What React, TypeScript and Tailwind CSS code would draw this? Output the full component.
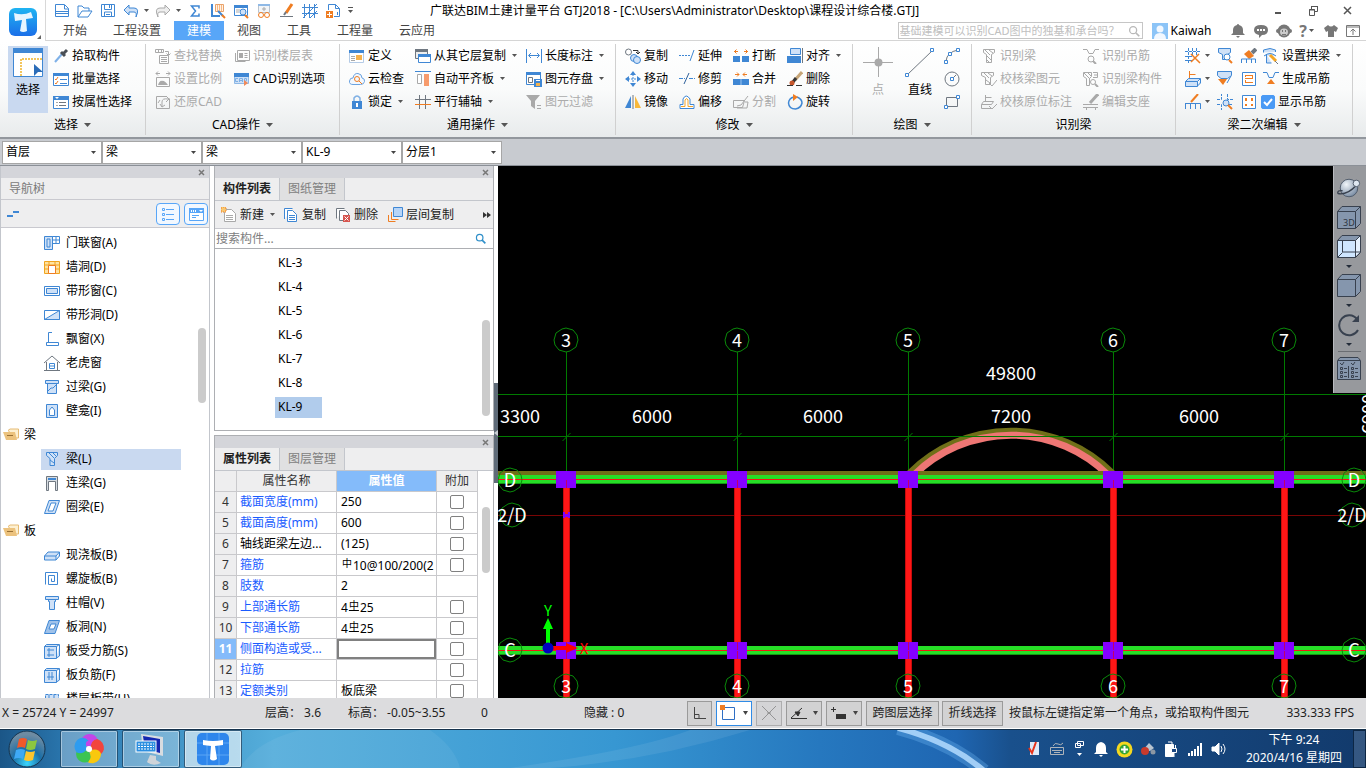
import { useState } from "react";
import type { ReactNode } from "react";

const B = "#3f87d4";
const L = "#cfe1f7";
const G = "#a9a9a9";
const O = "#ef7d22";
const D = "#6f7780";

// 16x16 drawings, keyed by name
const icons: Record<string, ReactNode> = {
  newFile: <path d="M1.500 13.500v-12h9l4 4v8zM10.500 2v4h4M1.500 8.500h13M1.500 10.500h13" fill="none" stroke={B} />,
  open: <path d="M1 14V3h4l2 2h5v3M1 14l4-6h10l-4 6z" fill="none" stroke={B} />,
  save: <path d="M1.500 1.500h13v12h-13zM4.500 1.500v5h7v-5M4.500 13v-4h7v4M9.500 2v3M6 11.500h4" fill="none" stroke={B} />,
  undo: <path d="M6 2 1 7l5 5V9h5q3 0 2 5 4-9-2-9H6z" fill={L} stroke={B} />,
  redo: <path d="M10 2l5 5-5 5V9H5q-3 0-2 5-4-9 2-9h5z" fill="#eee" stroke={G} />,
  sum: <path d="M12 5.500V3H4.500L8.500 8l-4 5H12v-2.500" fill="none" stroke={B} strokeWidth="1.500" />,
  measure: (
    <>
      <path d="M2 1v12h8" fill="none" stroke={B} strokeWidth="2" />
      <path d="M5.500 1.500h8v7h-8z" fill="#fff3e6" stroke="#e9a36b" />
      <path d="M7 3h5M7 5h5M7 7h5" stroke={O} strokeDasharray="1 1" />
      <path d="M8 8l5 5" stroke={B} strokeWidth="2" />
      <path d="M12 12l3 3" stroke={O} strokeWidth="2" />
    </>
  ),
  viewZoom: (
    <>
      <path d="M1.500 2.500h13v10h-13z" fill="#fff" stroke={B} />
      <path d="M1 2h14v3H1z" fill={B} />
      <path d="M3 7h4M3 9h3" stroke={G} />
      <circle cx="10" cy="9" r="3" fill={L} stroke={B} />
      <path d="M12 12l3 3" stroke={O} strokeWidth="2" />
    </>
  ),
  glasses: (
    <>
      <path d="M2.500 1.500h11v8h-11z" fill="#f2f5f8" stroke="#b8c3cf" />
      <path d="M2 1h12v2H2z" fill="#8fb9e6" />
      <path d="M8 4v4M6 6h4" stroke={G} />
      <circle cx="5" cy="12" r="2.500" fill="none" stroke={O} />
      <circle cx="11" cy="12" r="2.500" fill="none" stroke={O} />
    </>
  ),
  pen: (
    <>
      <path d="M13 1 7 10" stroke={O} strokeWidth="3" />
      <path d="M7 9l-2 3" stroke={D} strokeWidth="2" />
      <path d="M1 13.500h13" stroke={D} />
    </>
  ),
  gridBlue: <path d="M0 4.500h16M0 10.500h16M2.500 1v14M7.500 1v14M12.500 1v14M1 15 15 1M8 15l7-7" fill="none" stroke={B} />,
  pageAdd: (
    <>
      <path d="M3.500 7V1.500h7l4 4v8H9M10.500 1.500v4h4" fill="none" stroke={B} />
      <path d="M1 8h7v7H1z" fill={O} />
      <path d="M4.500 9v5M2 11.500h5" stroke="#fff" />
      <path d="M12.500 9v3" stroke={B} />
    </>
  ),
  dropper: (
    <>
      <path d="M2 14 9 6" stroke="#7fb1e8" strokeWidth="2" />
      <path d="M8 4l4 4M10 6l4-4" stroke="#4a4f55" strokeWidth="3" />
    </>
  ),
  checklist: (
    <>
      <path d="M.500 2.500h15v12H.500z" fill="#fff" stroke={B} />
      <path d="M0 2h16v3H0z" fill={B} />
      <path d="M2 8l1 1 2-3M2 12l1 1 2-3" fill="none" stroke={O} />
      <path d="M7 8.500h7M7 12.500h7" stroke={B} />
    </>
  ),
  proplist: (
    <>
      <path d="M.500 2.500h15v12H.500z" fill="#fff" stroke={B} />
      <path d="M0 2h16v4H0z" fill={B} />
      <path d="M2 3h4l-2 2z" fill="#fff" />
      <path d="M3 8.500h2M3 11.500h2" stroke={G} />
      <path d="M6 8.500h7M6 11.500h7" stroke={D} />
    </>
  ),
  findReplace: <path d="M.500 1.500h8v3h-8zM3.500 1.500v3M6.500 1.500v3M10 3.500h3.500V7M11.500 5.500l2 2 2-2M4.500 7.500h9v8h-9zM6 9.500h6M6 11.500h6M6 13.500h6" fill="none" stroke={G} />,
  scale: (
    <>
      <path d="M1.500 6.500h13v9h-13zM1 2.500h4M11 2.500h4M3 .500l-2 2 2 2M13 .500l2 2-2 2" fill="none" stroke={G} />
      <path d="M3 14q2-5 4-4 2-1 6 4z" fill={G} />
    </>
  ),
  restore: <path d="M1.500 2.500h10M1.500 2.500v12h13v-10M5 6l-2 3M7 13V8q0-4 6-3M5 10l2 3 3-2M11 2l3 3-3 3" fill="none" stroke={G} />,
  idTable: (
    <>
      <path d="M3.500 2.500h12v10h-12zM1.500 5v8.500h10" fill="none" stroke={G} />
      <path d="M5 5h4v5H5z" fill={G} />
      <path d="M10.500 5.500h3M10.500 7.500h3M10.500 9.500h3" stroke={G} />
    </>
  ),
  cad: (
    <>
      <path d="M.500 2.500h14v10H.500z" fill={L} stroke="#8fb9e6" />
      <path d="M0 2h15v4H0z" fill={B} />
      <path d="M4 7.500H1.500v3H4M5.500 11V7.500h3V11M6 9.500h3M10.500 7.500v3q3 0 2-3z" fill="none" stroke="#7fb0e4" />
      <path d="M10 9v6l4-3z" fill="#f08a5a" />
    </>
  ),
  define: (
    <>
      <path d="M.500 2.500h14v12H.500z" fill="#fff" stroke="#b4cbe6" />
      <path d="M0 2h15v3H0z" fill={B} />
      <path d="M7 7h6v5H7z" fill="#f5b24d" />
      <path d="M2 8.500h4M2 10.500h4M2 12.500h4" stroke={G} />
    </>
  ),
  cloud: (
    <>
      <path d="M4 13.500q-4 0-3.500-3.500T4 7q1-5 5-4.500T13 7q3 .500 2.500 3.500t-4 3z" fill="#f3f8fe" stroke="#6ba3e0" />
      <circle cx="8" cy="8" r="2.500" fill="none" stroke={O} />
      <path d="M10 10l3 3" stroke={O} />
    </>
  ),
  lock: (
    <>
      <path d="M5 8V4q3-4 6 0v4" fill="none" stroke="#7fb0e4" strokeWidth="1.500" />
      <rect x="3" y="7" width="10" height="8" fill={B} />
      <path d="M8 9v4" stroke="#fff" strokeWidth="2" />
    </>
  ),
  copyLayer: (
    <>
      <path d="M.500 1.500h12v9H.500z" fill="#eee" stroke={D} />
      <path d="M0 1h13v3H0z" fill={D} />
      <path d="M3.500 6.500h12v8h-12z" fill="#fff" stroke={B} />
      <path d="M3 6h13v3H3z" fill={B} />
    </>
  ),
  alignSlab: (
    <>
      <path d="M0 .500h16" stroke={B} />
      <path d="M2.500 3.500h4v9h-4z" fill="#fff" stroke={G} />
      <path d="M9 3h5v12H9z" fill="#f79b6c" />
    </>
  ),
  parallel: (
    <>
      <path d="M4.500 1v14M10.500 1v14" stroke={D} />
      <path d="M0 5.500h16" stroke={D} />
      <path d="M0 10.500h16" stroke={O} />
    </>
  ),
  length: <path d="M.500 1v14M15.500 1v14M3 7.500h10M5 5 2.500 7.500 5 10M11 5l2.500 2.500L11 10" fill="none" stroke={B} />,
  store: (
    <>
      <path d="M.500 1.500h14v12H.500z" fill="#fff" stroke={B} />
      <path d="M0 1h15v3H0z" fill={B} />
      <path d="M2.500 6.500h4v5h-4z" fill="none" stroke={D} />
      <path d="M8 8h8v8H8z" fill={B} />
      <path d="M10 12h4v3h-4z" fill="#f5b24d" />
      <path d="M10 9h4v1h-4z" fill="#fff" />
    </>
  ),
  filter: (
    <>
      <path d="M0 1h14L9 7v8l-4-3V7z" fill={G} />
      <path d="M11 11.500h4M11 14.500h4" stroke={G} />
    </>
  ),
  copy: (
    <>
      <circle cx="3.500" cy="4" r="3" fill="#fff" stroke={D} />
      <path d="M8 2.500h5v3M11 4l2 2 2-2" fill="none" stroke="#333" />
      <circle cx="9" cy="10" r="3.500" fill={L} stroke={B} />
      <circle cx="12" cy="12" r="3.500" fill={L} stroke={B} />
    </>
  ),
  move: (
    <>
      <path d="M8 3v10M3 8h10" stroke={B} strokeDasharray="2 1" />
      <path d="M8 0l3 4H5zM8 16l3-4H5zM0 8l4-3v6zM16 8l-4-3v6z" fill={B} />
    </>
  ),
  mirror: (
    <>
      <path d="M6 2v12H0z" fill={B} />
      <path d="M10 2v12h6z" fill="#f9b83a" />
      <path d="M8 1v14" stroke={D} />
    </>
  ),
  extend: (
    <>
      <path d="M0 7.500h11" stroke={B} strokeDasharray="2 1" />
      <path d="M15 2l-4 11" stroke={B} />
    </>
  ),
  trim: (
    <>
      <path d="M0 7.500h6M10 7.500h6" stroke={B} strokeDasharray="4 1" />
      <path d="M10 2 5 13" stroke="#2d5f9a" />
    </>
  ),
  offset: (
    <>
      <path d="M1 14.500v-4h3V5q3-6 7 0v5.500h4v4z" fill="#fff" stroke={B} />
      <path d="M2 12.500h4V6q2-3 3 0v6.500h5" fill="none" stroke="#f3a52a" />
    </>
  ),
  breakIt: (
    <>
      <path d="M0 8h7v6H0zM9 8h7v6H9z" fill={B} />
      <path d="M1 3.500h4M3.500 1.500l-2 2 2 2M11 3.500h4M12.500 1.500l2 2-2 2" fill="none" stroke={O} />
    </>
  ),
  merge: (
    <>
      <path d="M0 8h16v6H0z" fill={B} />
      <path d="M8 8v6" stroke="#9cc4ef" />
      <path d="M2 3.500h4M4 1.500l2 2-2 2M10 3.500h4M12 1.500l-2 2 2 2" fill="none" stroke={O} />
    </>
  ),
  split: <path d="M.500 6.500h11l-2 7h-9zM15 2 8 11l-4 1M12 8h3l-1 6H4" fill="none" stroke={G} />,
  align: (
    <>
      <path d="M3.500.500h10v6h-10z" fill={L} stroke={B} />
      <path d="M0 8h14v7H0z" fill={B} />
      <path d="M15.500 0v15" stroke={D} />
    </>
  ),
  erase: (
    <>
      <path d="M15 1 8 9" stroke="#c6a577" strokeWidth="3" />
      <path d="M9 7l-3 4" stroke="#333" strokeWidth="3" />
      <circle cx="5" cy="12" r="2.500" fill="#c4552b" />
      <path d="M0 14.500h6M9 14.500h6" stroke="#333" />
    </>
  ),
  rotate: (
    <>
      <path d="M10 3q5 2 5 6-1 5-6.500 6Q2 15 1.500 9 2 4 7 3" fill="none" stroke={B} strokeWidth="1.500" />
      <path d="M6 0l5 3-5 4z" fill={O} />
    </>
  ),
  arc: (
    <>
      <path d="M2 13Q3 4 14 2" fill="none" stroke={D} />
      <path d="M.500 12.500h3v3h-3zM4.500 4.500h3v3h-3zM12.500.500h3v3h-3z" fill="#fff" stroke={B} />
    </>
  ),
  circle: (
    <>
      <circle cx="8" cy="8" r="7" fill="none" stroke={D} />
      <path d="M8 8l4-4" stroke={D} />
      <path d="M6.500 6.500h3v3h-3z" fill="#fff" stroke={B} />
    </>
  ),
  rect: (
    <>
      <path d="M2.500 3.500h11v9h-11z" fill="none" stroke={D} />
      <path d="M12.500 1.500h3v3h-3zM.500 11.500h3v3h-3z" fill="#fff" stroke={B} />
    </>
  ),
  idBeam: <path d="M2.500 1.500h11v3l-3 2v8h-5v-8l-3-2zM4 2l5 5M8 2l4 3M6 8l4 4M6 12l2 2" fill="none" stroke={G} />,
  checkBeam: <path d="M.500 1.500h12v3l-3 2v7h-5v-7l-4-2zM3 2l5 5M7 2l4 3M5 9l4 3M8 12l3 3 5-6" fill="none" stroke={G} />,
  checkNote: <path d="M4.500 7V1M4.500 3.500h6M2.500 7.500h10l-2 3h-10zM.500 10.500v4h10M8 12l3 3 5-5" fill="none" stroke={G} />,
  idHanger: (
    <>
      <path d="M0 1.500h4l2 4h4l2-4h4" fill="none" stroke={G} />
      <circle cx="8" cy="11" r="3" fill="none" stroke={G} />
      <path d="M10 13l3 3" stroke={G} strokeWidth="2" />
    </>
  ),
  idMember: (
    <>
      <path d="M.500 1.500h8v4l-2 2v7h-3v-7l-3-2zM10 1.500h4.500v5H10M11 4h3" fill="none" stroke={G} />
      <path d="M1 2l6 6M5 2l3 3" stroke={G} />
      <circle cx="10" cy="11" r="2.500" fill="#fff" stroke={G} />
      <path d="M12 13l3 3" stroke={G} strokeWidth="2" />
    </>
  ),
  editSupport: (
    <>
      <path d="M15 0 7 9" stroke={G} strokeWidth="3" />
      <path d="M0 10.500h15M0 13.500h15M3.500 13v3M12.500 13v3" stroke={G} />
    </>
  ),
  gridEdit: (
    <>
      <path d="M0 3.500h15M0 8.500h9M0 12.500h7M3.500 0v15M7.500 0v7M11.500 0v7" stroke={B} fill="none" strokeDasharray="3 1" />
      <path d="M6 6l9 9M14 6l-8 8" stroke={O} strokeWidth="1.500" />
    </>
  ),
  boxNote: (
    <>
      <path d="M4.500 9V0M4.500 3.500h6" stroke={O} />
      <path d="M.500 10.500l3-3h12l-3 3zM.500 10.500v5h12v-5M12.500 15l3-3V8" fill={L} stroke={B} />
    </>
  ),
  comb: (
    <>
      <path d="M13 0 6 8" stroke={O} strokeWidth="2" />
      <path d="M0 9.500h15.500v5.500M.500 10v5M5.500 10v5M10.500 10v5" fill="none" stroke={B} />
    </>
  ),
  beamSearch: (
    <>
      <path d="M1.500.500h12v4l-3 2v5h-5v-5l-4-2z" fill={L} stroke={B} />
      <circle cx="10" cy="9" r="3" fill="#fff" stroke={B} />
      <path d="M12 12l3 3" stroke={O} strokeWidth="2" />
    </>
  ),
  beamDown: (
    <>
      <path d="M.500.500h14v4l-4 3H4l-3.500-3z" fill={L} stroke={B} />
      <path d="M1 8h9l-4 6z" fill={O} />
      <path d="M10 12l4-7" stroke={B} />
    </>
  ),
  crossSearch: (
    <>
      <path d="M0 5.500h4.500V0M10.500 0v5.500H16M0 10.500h4.500V16M12 10.500h3" fill="none" stroke={B} strokeDasharray="3 1" />
      <circle cx="9" cy="9" r="3" fill={L} stroke={B} />
      <path d="M11 11l4 4" stroke={O} strokeWidth="2" />
    </>
  ),
  brush: (
    <>
      <path d="M15 1l-4 4" stroke={D} strokeWidth="4" />
      <path d="M8 2l5 6-5 3-5-5z" fill={O} />
      <path d="M.500 15v-4h14v4M5.500 11v4M10.500 11v4" fill="none" stroke={B} />
    </>
  ),
  doc: (
    <>
      <path d="M1.500 1.500h13v13h-13z" fill="#fff" stroke={B} />
      <path d="M4 4.500h8M4 7.500h8M4 11.500h8M4.500 4v2M11.500 4v3M4.500 9v2" stroke={O} />
    </>
  ),
  dots: (
    <>
      <path d="M1.500 1.500h13v13h-13z" fill="#fff" stroke={B} />
      <path d="M4 4h2v3H4zM10 4h2v3h-2zM4 10h2v2H4zM10 10h2v2h-2z" fill={O} />
    </>
  ),
  arch: (
    <>
      <path d="M.500 4.500V2q7-3 12 0v2M3.500 6v9h5M1 8q6-5 12 0" fill={L} stroke={B} />
      <path d="M7 7l6 6" stroke="#f5a623" strokeWidth="3" />
      <path d="M12 13l3 3" stroke={D} />
    </>
  ),
  hanger: (
    <>
      <path d="M0 1.500h4l2 5h4l2-5h4" fill="none" stroke={B} />
      <path d="M8 8l4 5H4z" fill={O} />
    </>
  ),
  // navigation tree
  doorWin: (
    <>
      <path d="M.500 1.500h8v13h-8z" fill={L} stroke={B} />
      <path d="M3 4h3v8H3zM8.500 1.500h7v7h-7zM12 2v6M9 5h6" fill="none" stroke={B} />
    </>
  ),
  wallHole: (
    <>
      <path d="M.500 2.500h15v12H.500zM0 6h16M5 2v4M11 2v4M0 10h4M12 10h4" fill="#ffe3a3" stroke="#f0a520" />
      <path d="M4.500 6.500h7v8h-7z" fill="#fff" stroke={O} />
    </>
  ),
  stripWin: (
    <>
      <path d="M.500 3.500h15v9H.500z" fill="#fff" stroke={B} />
      <path d="M2.500 5.500h11v5h-11z" fill={L} stroke={B} />
    </>
  ),
  stripHole: (
    <>
      <path d="M.500 3.500h15v9H.500z" fill="#fff" stroke={B} />
      <path d="M15.500 3.500v9H.500z" fill={L} stroke={B} />
    </>
  ),
  bay: <path d="M8 1.500H4.500v10M2.500 11.500h12v3h-12z" fill="none" stroke={B} />,
  dormer: (
    <>
      <path d="M0 8l8-7 8 7M2.500 7v8M13.500 7v8M0 15.500h16" fill="none" stroke={D} />
      <path d="M5.500 8.500h5v5h-5zM5 11h6" fill="none" stroke={B} />
    </>
  ),
  lintel: <path d="M1.500 1.500h13v3h-13zM3.500 4.500h9v10h-9zM4 12l3-3h2l3-3" fill={L} stroke={B} />,
  niche: (
    <>
      <path d="M2.500 1.500h11v13h-11z" fill={L} stroke={B} />
      <path d="M5.500 12.500V7l2.500-3 2.500 3v5.500z" fill="#fff" stroke={B} />
    </>
  ),
  beam: <path d="M2.500 1.500h11v3l-3 3v7H6v-7l-3.500-3zM5 2l5 5M6 9l4 3M9 2l3 3" fill={L} stroke={B} />,
  linkBeam: (
    <>
      <path d="M2.500 1.500h11v14h-2v-9h-7v9h-2z" fill="#d8dde2" stroke={D} />
      <path d="M4 3h8v2H4z" fill={B} />
    </>
  ),
  ring: <path d="M5 1.500h10.500L11 14.500H.500zM7 4h5l-3 8H4z" fill={L} fillRule="evenodd" stroke={B} />,
  slab: <path d="M.500 9 4 5h11.500L12 9zM.500 9v4H12V9M12 13l3.500-4V5" fill={L} stroke={B} />,
  spiral: <path d="M1.500 13.500v-12h12v12h-9v-9h6v6h-3v-3" fill="none" stroke={B} />,
  cap: <path d="M1.500 1.500h13v3h-3v2h-1v8h-5v-8h-1v-2h-3zM4 4.500h8" fill={L} stroke={B} />,
  slabHole: (
    <>
      <path d="M5 1.500h10.500L11 14.500H.500z" fill="#9fc2ea" stroke={B} />
      <path d="M7 5h5l-2 5H5z" fill="#fff" stroke={B} />
    </>
  ),
  rebarS: <path d="M.500 3.500h12v12H.500zM.500 3.500l2-2h13l-3 2M15.500 2v11l-3 2M3 7h7M3 12h7M5 5v9" fill={L} stroke={B} />,
  rebarF: <path d="M.500 3.500h12v12H.500zM.500 3.500l2-2h13l-3 2M15.500 2v11l-3 2M5 5v8M8 5v8M3 10h7" fill={L} stroke={B} />,
  strip: <path d="M1.500 3.500h13v11h-13zM5 4v10M10 4v10" fill={L} stroke={B} strokeDasharray="3 1" />,
  folder: (
    <>
      <path d="M5 3.500 7 2h8.500v9H13z" fill="#fdf0d2" stroke="#e6bb74" />
      <path d="M0 5h12l2 8H3z" fill="#ecc27d" />
      <path d="M4 8.500h6" stroke="#9a7135" />
    </>
  ),
  // component list toolbar
  create: (
    <>
      <path d="M3.500 2.500h7l4 4v8h-11zM5 8.500h7M5 10.500h7M5 12.500h7" fill="#fff" stroke={G} />
      <path d="M0 0h5v5H0z" fill="#f7c873" stroke={O} strokeDasharray="1 1" />
    </>
  ),
  copyDoc: <path d="M1.500 12V1.500h8M4.500 3.500h5l4 4v7h-9zM6 8.500h6M6 10.500h6M6 12.500h6" fill="#fff" stroke={B} />,
  deleteDoc: (
    <>
      <path d="M1.500 11.500v-10h8M4.500 3.500h6l3 3v7h-9z" fill="#fff" stroke={D} />
      <path d="M8 8h7v7H8z" fill="#d6544e" />
      <path d="M9.500 9.500l4 4M13.500 9.500l-4 4" stroke="#fff" />
    </>
  ),
  layerCopy: (
    <>
      <path d="M1.500 8v6.500h7M4.500 5v7.500h7" fill="none" stroke={O} />
      <path d="M6.500.500h9v9h-9z" fill="#b6d4f7" stroke={B} />
    </>
  ),
  search: (
    <>
      <circle cx="7" cy="7" r="4" fill="none" stroke="currentColor" strokeWidth="1.500" />
      <path d="M10 10l4 4" stroke="currentColor" strokeWidth="2" />
    </>
  ),
};

function Icon({ name, size = 16 }: { name: string; size?: number }) {
  return (
    <svg width={size} height={size} viewBox="0 0 16 16" className="shrink-0" aria-hidden="true">
      {icons[name]}
    </svg>
  );
}

function Arrow({ small }: { small?: boolean }) {
  return (
    <svg width={small ? 5 : 7} height={small ? 3 : 4} viewBox="0 0 7 4" className="shrink-0 text-[#555]" aria-hidden="true">
      <path d="M0 0h7L3.500 4z" fill="currentColor" />
    </svg>
  );
}

type ItemProps = { icon: string; label: string; disabled?: boolean; arrow?: boolean };

function Item({ icon, label, disabled, arrow }: ItemProps) {
  return (
    <button
      type="button"
      disabled={disabled}
      className="flex h-[23px] items-center gap-[3px] whitespace-nowrap disabled:text-[#ababab]"
    >
      <Icon name={icon} />
      <span>{label}</span>
      {arrow && (
        <span className="pl-[3px]">
          <Arrow small />
        </span>
      )}
    </button>
  );
}

function Group({ title, arrow = true, className, children }: { title: string; arrow?: boolean; className: string; children: ReactNode }) {
  return (
    <section className={"flex shrink-0 flex-col justify-between border-r border-[#d0d0d0] " + className}>
      <div className="flex pl-[9px]">{children}</div>
      <button type="button" className="flex h-5 w-full items-center justify-center gap-1.5">
        {title}
        {arrow && <Arrow />}
      </button>
    </section>
  );
}

function Header() {
  const quick = ["newFile", "open", "save", "undo", "", "redo", "", "sum", "measure", "viewZoom", "glasses", "pen", "gridBlue", "pageAdd"];
  const tabs = ["开始", "工程设置", "建模", "视图", "工具", "工程量", "云应用"];
  const [tab, setTab] = useState("建模");

  return (
    <header className="flex h-[41px] shrink-0 bg-white">
      <button type="button" aria-label="菜单" className="flex w-[46px] shrink-0 items-start border-r border-[#d8d8d8] pt-2 pl-[9px]">
        <svg width="34" height="32" viewBox="0 0 34 32">
          <defs>
            <linearGradient id="logo" x1="0" y1="0" x2="0" y2="1">
              <stop offset="0" stopColor="#1fb4f2" />
              <stop offset="1" stopColor="#1b6fe8" />
            </linearGradient>
          </defs>
          <rect width="28" height="28" rx="6" fill="url(#logo)" />
          <path d="M5 5q9 3 17-1l2 6-7 1 1 12q-4 2-7 0l2-11-7 1z" fill="#e6f5ff" />
          <path d="M32 27v4h-4z" fill="#666" />
        </svg>
      </button>
      <div className="flex min-w-0 flex-1 flex-col border-b border-[#d5d5d5]">
        <div className="flex h-[21px] shrink-0 items-center pl-1">
          <div className="flex w-[380px] shrink-0 items-center">
            {quick.map((name, i) =>
              name ? (
                <button key={i} type="button" aria-label={name} className="flex w-[23px] justify-center">
                  <Icon name={name} />
                </button>
              ) : (
                <span key={i} className="flex w-[9px] justify-center">
                  <Arrow small />
                </span>
              )
            )}
            <span className="pl-1">
              <svg width="5" height="7"><path d="M0 .500h5" stroke="#555" /><path d="M0 3h5L2.500 6z" fill="#555" /></svg>
            </span>
          </div>
          <h1 className="flex-1 truncate">
            广联达BIM土建计量平台 GTJ2018 - [C:\Users\Administrator\Desktop\课程设计综合楼.GTJ]
          </h1>
          <div className="flex shrink-0 gap-[22px] pr-3 text-[#555]">
            <button type="button" aria-label="最小化">
              <svg width="13" height="13"><path d="M4 8h6v2H4z" fill="currentColor" /></svg>
            </button>
            <button type="button" aria-label="还原">
              <svg width="13" height="13">
                <path d="M5.500 5V2.500h6v5H9M3.500 5.500h5v6h-5zM5 2.500h7M3 6h6" fill="none" stroke="currentColor" />
              </svg>
            </button>
            <button type="button" aria-label="关闭">
              <svg width="13" height="13"><path d="M3 3l7 7M10 3l-7 7" stroke="currentColor" strokeWidth="1.500" /></svg>
            </button>
          </div>
        </div>
        <nav className="flex min-h-0 flex-1 items-center pl-1">
          {tabs.map((t) => (
            <button
              key={t}
              type="button"
              onClick={() => setTab(t)}
              className={"h-[19px] px-[13px] " + (t === tab ? "bg-[#58a6f8] text-white" : "text-[#444]")}
            >
              {t}
            </button>
          ))}
          <div className="ml-auto flex items-center gap-[7px] pr-1.5 text-[#777]">
            <label className="mr-0.5 flex h-[17px] w-[245px] items-center border border-[#c6c6c6] px-px text-[#b8b8b8]">
              <input
                aria-label="搜索"
                className="min-w-0 flex-1 text-[11px] outline-none placeholder:text-[#c0c0c0]"
                placeholder="基础建模可以识别CAD图中的独基和承台吗？"
              />
              <Icon name="search" size={14} />
            </label>
            <span className="mr-3 flex items-center gap-[3px] text-black">
              <svg width="16" height="16" viewBox="0 0 16 16">
                <rect width="16" height="16" fill="#8cc4f7" />
                <circle cx="8" cy="6" r="3.500" fill="#f2f8ff" />
                <path d="M2 16q0-6 6-6t6 6z" fill="#f2f8ff" />
              </svg>
              Kaiwah
            </span>
            <svg width="16" height="16" viewBox="0 0 16 16" fill="currentColor">
              <path d="M8 1q1 0 1 1 4 1 4 5v3l2 2H1l2-2V7q0-4 4-5 0-1 1-1zM6 13h4l-2 2z" />
            </svg>
            <svg width="16" height="16" viewBox="0 0 16 16" fill="currentColor">
              <path d="M8 2q7 0 7 5t-6 5l-3 3v-3Q1 11 1 7q0-5 7-5z" />
              <path d="M4 6h2v2H4zM7 6h2v2H7zM10 6h2v2h-2z" fill="#fff" />
            </svg>
            <svg width="16" height="16" viewBox="0 0 16 16" fill="currentColor">
              <circle cx="8" cy="8" r="6.500" />
              <circle cx="2" cy="8" r="2" />
              <circle cx="14" cy="8" r="2" />
              <ellipse cx="8" cy="9" rx="4" ry="3.500" fill="#ccc" />
              <path d="M6 7h1v2H6zM9 7h1v2H9zM6 11h4v1H6z" />
            </svg>
            <span className="flex items-center gap-0.5 text-base leading-4 font-bold">
              ?<Arrow small />
            </span>
            <svg width="16" height="16" viewBox="0 0 16 16" fill="currentColor" className="ml-0.5">
              <path d="M5 2q3 3 6 0l4 3-2 4-2-1v6H5V8L3 9 1 5z" />
            </svg>
            <svg width="14" height="14" viewBox="0 0 14 14" fill="none" stroke="currentColor">
              <path d="M.500 1.500h13v11H.500zM0 3h14M7 11V5M4.500 7.500 7 5l2.500 2.500" />
            </svg>
          </div>
        </nav>
      </div>
    </header>
  );
}

function Ribbon() {
  return (
    <div className="flex h-[98px] shrink-0 overflow-hidden border-b-2 border-[#92979d] bg-linear-to-b from-white via-[#fafbfb] to-[#e8ebec] pt-[3px] pb-0.5">
      <Group title="选择" className="w-[146px]">
        <button type="button" className="mt-0.5 -ml-px flex h-[67px] w-10 flex-col items-center bg-[#c9d9f0]">
          <svg width="30" height="36" viewBox="0 0 30 36">
            <path d="M.500 2.500h29v28H.500z" fill="#fff" stroke={B} />
            <path d="M0 2h30v5H0z" fill={B} />
            <path d="M8 30V13h21" fill="none" stroke="#f0b429" strokeDasharray="2 1" strokeWidth="1.500" />
            <path d="M21 18l9 8-5 0-4 4z" fill="#2b6cb8" />
          </svg>
          选择
        </button>
        <div className="ml-[5px]">
          <Item icon="dropper" label="拾取构件" />
          <Item icon="checklist" label="批量选择" />
          <Item icon="proplist" label="按属性选择" />
        </div>
      </Group>
      <Group title="CAD操作" className="w-[194px]">
        <div className="w-[79px]">
          <Item icon="findReplace" label="查找替换" disabled />
          <Item icon="scale" label="设置比例" disabled />
          <Item icon="restore" label="还原CAD" disabled />
        </div>
        <div>
          <Item icon="idTable" label="识别楼层表" disabled />
          <Item icon="cad" label="CAD识别选项" />
        </div>
      </Group>
      <Group title="通用操作" className="w-[276px]">
        <div className="w-[66px]">
          <Item icon="define" label="定义" />
          <Item icon="cloud" label="云检查" />
          <Item icon="lock" label="锁定" arrow />
        </div>
        <div className="w-[111px]">
          <Item icon="copyLayer" label="从其它层复制" arrow />
          <Item icon="alignSlab" label="自动平齐板" arrow />
          <Item icon="parallel" label="平行辅轴" arrow />
        </div>
        <div>
          <Item icon="length" label="长度标注" arrow />
          <Item icon="store" label="图元存盘" arrow />
          <Item icon="filter" label="图元过滤" disabled />
        </div>
      </Group>
      <Group title="修改" className="w-[237px]">
        <div className="w-[54px]">
          <Item icon="copy" label="复制" />
          <Item icon="move" label="移动" />
          <Item icon="mirror" label="镜像" />
        </div>
        <div className="w-[54px]">
          <Item icon="extend" label="延伸" />
          <Item icon="trim" label="修剪" />
          <Item icon="offset" label="偏移" />
        </div>
        <div className="w-[54px]">
          <Item icon="breakIt" label="打断" />
          <Item icon="merge" label="合并" />
          <Item icon="split" label="分割" disabled />
        </div>
        <div>
          <Item icon="align" label="对齐" arrow />
          <Item icon="erase" label="删除" />
          <Item icon="rotate" label="旋转" />
        </div>
      </Group>
      <Group title="绘图" className="w-[119px]">
        <button type="button" disabled className="flex w-8 flex-col items-center pt-0.5 text-[#ababab]">
          <svg width="30" height="36" viewBox="0 0 30 36">
            <path d="M0 16.500h30M15.500 1v30" stroke={G} />
            <circle cx="15.500" cy="16.500" r="4" fill={G} />
          </svg>
          点
        </button>
        <button type="button" className="ml-2.5 flex w-8 flex-col items-center pt-0.5">
          <svg width="30" height="36" viewBox="0 0 30 36">
            <path d="M2 29 28 4" stroke={D} />
            <path d="M.500 27.500h3v3h-3zM25.500 2.500h3v3h-3z" fill="#fff" stroke={B} />
          </svg>
          直线
        </button>
        <div className="ml-2">
          {["arc", "circle", "rect"].map((n) => (
            <button key={n} type="button" aria-label={n} className="flex h-[23px] items-center">
              <Icon name={n} />
            </button>
          ))}
        </div>
      </Group>
      <Group title="识别梁" arrow={false} className="w-[204px]">
        <div className="w-[102px]">
          <Item icon="idBeam" label="识别梁" disabled />
          <Item icon="checkBeam" label="校核梁图元" disabled />
          <Item icon="checkNote" label="校核原位标注" disabled />
        </div>
        <div>
          <Item icon="idHanger" label="识别吊筋" disabled />
          <Item icon="idMember" label="识别梁构件" disabled />
          <Item icon="editSupport" label="编辑支座" disabled />
        </div>
      </Group>
      <Group title="梁二次编辑" className="w-[177px]">
        <div className="w-8">
          {["gridEdit", "boxNote", "comb"].map((n) => (
            <button key={n} type="button" aria-label={n} className="flex h-[23px] items-center gap-1">
              <Icon name={n} />
              <Arrow small />
            </button>
          ))}
        </div>
        <div className="w-6">
          {["beamSearch", "beamDown", "crossSearch"].map((n) => (
            <button key={n} type="button" aria-label={n} className="flex h-[23px] items-center">
              <Icon name={n} />
            </button>
          ))}
        </div>
        <div className="w-[22px]">
          {["brush", "doc", "dots"].map((n) => (
            <button key={n} type="button" aria-label={n} className="flex h-[23px] items-center">
              <Icon name={n} />
            </button>
          ))}
        </div>
        <div>
          <Item icon="arch" label="设置拱梁" arrow />
          <Item icon="hanger" label="生成吊筋" />
          <label className="flex h-[23px] items-center gap-[3px]">
            <span className="-ml-0.5 grid">
              <input
                type="checkbox"
                defaultChecked
                className="peer col-start-1 row-start-1 size-3.5 appearance-none rounded-xs border border-[#888] checked:border-[#4a9af5] checked:bg-[#4a9af5]"
              />
              <svg viewBox="0 0 14 14" className="pointer-events-none invisible col-start-1 row-start-1 size-3.5 peer-checked:visible">
                <path d="M3 7l3 3 5-6" fill="none" stroke="#fff" strokeWidth="2" />
              </svg>
            </span>
            显示吊筋
          </label>
        </div>
      </Group>
    </div>
  );
}

function Selectors() {
  const values = ["首层", "梁", "梁", "KL-9", "分层1"];
  return (
    <div className="flex h-[27px] shrink-0 items-center border-b border-[#8b9097] bg-[#c8cbd0] pl-0.5">
      {values.map((v, i) => (
        <label key={i} className="grid w-[100px] items-center">
          <select
            aria-label={"选择" + (i + 1)}
            className="col-start-1 row-start-1 h-[23px] w-full appearance-none border border-[#a6a6a6] bg-white px-[3px] outline-none"
          >
            <option>{v}</option>
          </select>
          <span className="pointer-events-none col-start-1 row-start-1 mr-1.5 justify-self-end">
            <svg width="5" height="3"><path d="M0 0h5L2.500 3z" fill="#444" /></svg>
          </span>
        </label>
      ))}
    </div>
  );
}

function CloseBar() {
  return (
    <div className="flex h-3 shrink-0 items-center justify-end bg-[#d4d5da] pr-1">
      <button type="button" aria-label="关闭面板">
        <svg width="7" height="7" className="block">
          <path d="M1 1l5 5M6 1 1 6" stroke="#777" strokeWidth="1.500" />
        </svg>
      </button>
    </div>
  );
}

const tree = [
  { icon: "doorWin", label: "门联窗(A)" },
  { icon: "wallHole", label: "墙洞(D)" },
  { icon: "stripWin", label: "带形窗(C)" },
  { icon: "stripHole", label: "带形洞(D)" },
  { icon: "bay", label: "飘窗(X)" },
  { icon: "dormer", label: "老虎窗" },
  { icon: "lintel", label: "过梁(G)" },
  { icon: "niche", label: "壁龛(I)" },
  { icon: "folder", label: "梁", root: true },
  { icon: "beam", label: "梁(L)" },
  { icon: "linkBeam", label: "连梁(G)" },
  { icon: "ring", label: "圈梁(E)" },
  { icon: "folder", label: "板", root: true },
  { icon: "slab", label: "现浇板(B)" },
  { icon: "spiral", label: "螺旋板(B)" },
  { icon: "cap", label: "柱帽(V)" },
  { icon: "slabHole", label: "板洞(N)" },
  { icon: "rebarS", label: "板受力筋(S)" },
  { icon: "rebarF", label: "板负筋(F)" },
  { icon: "strip", label: "楼层板带(H)" },
];

function NavTree() {
  const [selected, setSelected] = useState("梁(L)");
  return (
    <aside className="flex w-[210px] shrink-0 flex-col border-x border-[#c3c6cc] bg-white">
      <CloseBar />
      <h2 className="flex h-[22px] shrink-0 items-center border-b border-[#c9c9cf] bg-[#eeeeef] pl-2 text-[#7a7a7a]">导航树</h2>
      <div className="flex h-7 shrink-0 items-center gap-1 border-b border-[#c9c9cf] bg-[#eeeeef] pr-px pl-1.5">
        <svg width="13" height="8"><path d="M0 5h6v2H0zM6 1h6v2H6z" fill={B} /></svg>
        <button type="button" aria-label="列表" className="ml-auto flex h-[22px] w-6 items-center justify-center rounded-sm border border-[#58a6f8] bg-[#f2f8ff]">
          <svg width="14" height="14" fill="none" stroke="#58a6f8">
            <path d="M1.500 1.500h2v2h-2zM1.500 6.500h2v2h-2zM1.500 11.500h2v2h-2zM5 2.500h8M5 7.500h8M5 12.500h8" />
          </svg>
        </button>
        <button type="button" aria-label="图标" className="flex h-[22px] w-6 items-center justify-center rounded-sm border border-[#58a6f8] bg-[#f2f8ff]">
          <svg width="15" height="14">
            <path d="M.500 1.500h14v12H.500z" fill="#fff" stroke="#58a6f8" />
            <path d="M0 1h15v5H0z" fill="#58a6f8" />
            <path d="M2 3h1v2H2zM4 3h1v2H4zM6 3h1v2H6zM10 3h4l-2 2z" fill="#fff" />
            <path d="M3 8.500h7M3 10.500h4" stroke="#58a6f8" />
          </svg>
        </button>
      </div>
      <div className="relative min-h-0 flex-1 overflow-hidden">
        <ul className="pt-[3px]">
          {tree.map((n, i) => (
            <li key={i} className={"flex h-6 items-center " + (n.root ? "pl-0.5" : "pl-10")}>
              <button
                type="button"
                onClick={() => setSelected(n.label)}
                className={
                  "flex h-[21px] items-center whitespace-nowrap " +
                  (n.root ? "gap-[5px]" : "w-[140px] gap-1.5 pl-[3px]") +
                  (selected === n.label ? " bg-[#c9d9f0]" : "")
                }
              >
                <Icon name={n.icon} />
                {n.label}
              </button>
            </li>
          ))}
        </ul>
        <div className="absolute top-[100px] right-[3px] h-[75px] w-2 rounded-full bg-[#cbcbcb]" />
      </div>
    </aside>
  );
}

function PanelTabs({ tabs }: { tabs: string[] }) {
  return (
    <div className="flex h-[23px] shrink-0 border-b border-[#c3c6cc] bg-[#eeeeef]">
      <button type="button" className="w-[65px] border-r border-[#c3c6cc] font-semibold text-[#222]">
        {tabs[0]}
      </button>
      <button type="button" className="w-[65px] border-r border-[#c3c6cc] bg-[#e0e0e1] text-[#808080]">
        {tabs[1]}
      </button>
    </div>
  );
}

function ComponentList() {
  const [selected, setSelected] = useState("KL-9");
  return (
    <section className="flex h-[265px] shrink-0 flex-col border border-t-0 border-[#adafb3] bg-white">
      <CloseBar />
      <PanelTabs tabs={["构件列表", "图纸管理"]} />
      <div className="flex h-7 shrink-0 items-center border-b border-[#c9c9cf] bg-[#eeeeef] pr-0.5 pl-1.5 text-[#222]">
        <Item icon="create" label="新建" arrow />
        <span className="ml-2 flex flex-1 items-center gap-[9px]">
          <Item icon="copyDoc" label="复制" />
          <Item icon="deleteDoc" label="删除" />
          <Item icon="layerCopy" label="层间复制" />
        </span>
        <svg width="8" height="6"><path d="M0 0l4 3-4 3zM4 0l4 3-4 3z" fill="#333" /></svg>
      </div>
      <label className="flex h-5 shrink-0 items-center border-b border-[#adafb3] pr-1.5 pl-px text-[#2f8fc9]">
        <input aria-label="搜索构件" className="min-w-0 flex-1 outline-none placeholder:text-[#808080]" placeholder="搜索构件..." />
        <Icon name="search" size={13} />
      </label>
      <div className="relative min-h-0 flex-1 pt-0.5">
        {["KL-3", "KL-4", "KL-5", "KL-6", "KL-7", "KL-8", "KL-9"].map((k) => (
          <div key={k} className="flex h-6 items-center pl-[60px]">
            <button
              type="button"
              onClick={() => setSelected(k)}
              className={"h-[21px] w-[47px] pl-[3px] text-left " + (selected === k ? "bg-[#b1ccec]" : "")}
            >
              {k}
            </button>
          </div>
        ))}
        <div className="absolute top-[71px] right-[3px] h-24 w-2 rounded-full bg-[#cbcbcb]" />
      </div>
    </section>
  );
}

const props: { no: number; name: string; value: ReactNode; black?: boolean; noCheck?: boolean }[] = [
  { no: 4, name: "截面宽度(mm)", value: "250" },
  { no: 5, name: "截面高度(mm)", value: "600" },
  { no: 6, name: "轴线距梁左边...", value: "(125)", black: true },
  { no: 7, name: "箍筋", value: <><Bar />10@100/200(2</> },
  { no: 8, name: "肢数", value: "2", noCheck: true },
  { no: 9, name: "上部通长筋", value: <>4<Bar line />25</> },
  { no: 10, name: "下部通长筋", value: <>4<Bar line />25</> },
  { no: 11, name: "侧面构造或受...", value: "" },
  { no: 12, name: "拉筋", value: "" },
  { no: 13, name: "定额类别", value: "板底梁" },
];

// rebar grade sign
function Bar({ line }: { line?: boolean }) {
  return <span className={"px-px align-text-top text-[10px] leading-3" + (line ? " underline" : "")}>中</span>;
}

function PropertyList() {
  return (
    <section className="mt-1 flex min-h-0 flex-1 flex-col overflow-hidden border border-b-0 border-[#adafb3] bg-white">
      <CloseBar />
      <PanelTabs tabs={["属性列表", "图层管理"]} />
      <div className="relative min-h-0 flex-1 overflow-hidden">
        <table className="w-[263px] table-fixed border-separate border-spacing-0">
          <colgroup>
            <col className="w-[22px]" />
            <col className="w-[100px]" />
            <col className="w-[100px]" />
            <col className="w-[41px]" />
          </colgroup>
          <thead>
            <tr className="h-[21px] bg-[#eeeeef] text-[#333]">
              <th aria-label="序号" className="border-r border-b border-[#c9c9cc]" />
              <th className="border-r border-b border-[#c9c9cc] font-normal">属性名称</th>
              <th className="border-r border-b border-[#c9c9cc] bg-[#84bbfa] font-semibold text-white">属性值</th>
              <th className="border-r border-b border-[#c9c9cc] font-normal">附加</th>
            </tr>
          </thead>
          <tbody>
            {props.map((p) => (
              <tr key={p.no} className="h-[21px]">
                <td
                  className={
                    "border-r border-b border-[#c9c9cc] p-0 text-center " +
                    (p.no === 11 ? "bg-[#84bbfa] font-bold text-white" : "bg-[#eeeeef] text-[#333]")
                  }
                >
                  {p.no}
                </td>
                <td className={"border-r border-b border-[#c9c9cc] p-0 pl-[3px] whitespace-nowrap " + (p.black ? "" : "text-[#1a5cff]")}>
                  {p.name}
                </td>
                <td className="overflow-hidden border-r border-b border-[#c9c9cc] p-0 whitespace-nowrap">
                  {p.no === 11 ? (
                    <input aria-label={p.name} className="block h-5 w-full border-2 border-[#808080] px-0.5 outline-none" />
                  ) : (
                    <span className="pl-1">{p.value}</span>
                  )}
                </td>
                <td className="border-r border-b border-[#c9c9cc] p-0">
                  {!p.noCheck && (
                    <input
                      type="checkbox"
                      aria-label={"附加 " + p.name}
                      className="mx-auto block size-3.5 appearance-none rounded-xs border border-[#808080] bg-white checked:bg-[#58a6f8]"
                    />
                  )}
                </td>
              </tr>
            ))}
          </tbody>
        </table>
        <div className="absolute top-9 right-[3px] h-[66px] w-2 rounded-full bg-[#cbcbcb]" />
      </div>
    </section>
  );
}

const axes = [
  { n: "3", x: 566 },
  { n: "4", x: 737 },
  { n: "5", x: 908 },
  { n: "6", x: 1113 },
  { n: "7", x: 1284 },
];

const dims = [
  { x: 520, y: 423, t: "3300" },
  { x: 652, y: 423, t: "6000" },
  { x: 823, y: 423, t: "6000" },
  { x: 1011, y: 423, t: "7200" },
  { x: 1199, y: 423, t: "6000" },
  { x: 1011, y: 380, t: "49800" },
];

function Bubble({ x, y, t }: { x: number; y: number; t: string }) {
  return (
    <>
      <path
        transform={`translate(${x} ${y})`}
        d="M-12 0l2-7 6-4 4-1 7 2 4 5 1 5-2 7-6 4-4 1-7-2-4-5z"
        fill="none"
        stroke="#0a8a0a"
      />
      <text x={x} y={y + 7} textAnchor="middle">{t}</text>
    </>
  );
}

function Plan() {
  return (
    <svg
      viewBox="498 166 868 532"
      preserveAspectRatio="xMinYMin slice"
      className="block h-full w-full font-['Noto_Sans_CJK_SC',sans-serif] text-[18px]"
      fill="#fff"
    >
      <path d="M498 394.500h868M498 436.500h868" stroke="#007a00" />
      {axes.map((a) => (
        <path key={a.n} d={`M${a.x + 0.5} 352v121M${a.x - 3.5} 441l8-8`} stroke="#007a00" />
      ))}
      <path d="M498 515.500h868" stroke="#7a0505" />
      <path d="M909 472.500A144 144 0 0 1 1113 472.500" fill="none" stroke="#706f18" strokeWidth="5" />
      <path d="M914 475A138 138 0 0 1 1108 475" fill="none" stroke="#ee7674" strokeWidth="7" />
      <path d="M960 436.500h102" stroke="#007a00" />
      <rect x="498" y="471" width="868" height="4" fill="#706f18" />
      <rect x="498" y="475" width="868" height="9" fill="#26de26" />
      <rect x="498" y="483" width="868" height="1" fill="#149814" />
      <rect x="498" y="646" width="868" height="8" fill="#26de26" />
      <rect x="498" y="654" width="868" height="1" fill="#149814" />
      {axes.map((a) => (
        <g key={a.n}>
          <rect x={a.x - 3} y="480" width="7" height="218" fill="#c80c0c" />
          <rect x={a.x - 2} y="480" width="5" height="218" fill="#ff1616" />
          <rect x={a.x - 10} y="471" width="20" height="17" fill="#8400ff" />
          <rect x={a.x - 10} y="642" width="20" height="17" fill="#8400ff" />
          <path d={`M${a.x + 0.5} 480v8M${a.x + 0.5} 642v17`} stroke="#c2006a" />
        </g>
      ))}
      <path d="M498 479.500h868M498 650.500h868" stroke="#f51414" />
      {axes.map((a) => (
        <path key={a.n} d={`M${a.x - 10} 479.500h20M${a.x - 10} 650.500h20`} stroke="#8400ff" />
      ))}
      <path d="M563 512h2v6h-2zM568 512h2v6h-2zM565 514h3v3h-3z" fill="#8400ff" />

      {axes.map((a) => (
        <g key={a.n}>
          <Bubble x={a.x} y={340} t={a.n} />
          <Bubble x={a.x} y={686} t={a.n} />
        </g>
      ))}
      <Bubble x={510} y={480} t="D" />
      <Bubble x={512} y={515} t="2/D" />
      <Bubble x={510} y={650} t="C" />
      <Bubble x={1354} y={480} t="D" />
      <Bubble x={1352} y={515} t="2/D" />
      <Bubble x={1354} y={650} t="C" />

      {dims.map((d, i) => (
        <text key={i} x={d.x} y={d.y} textAnchor="middle">{d.t}</text>
      ))}
      <text transform="translate(1375 434) rotate(-90)">6900</text>

      <path d="M546 648v-19h-3l5-11 5 11h-3v19z" fill="#00ff00" />
      <path d="M548 646h18v-3l12 5-12 5v-3h-18z" fill="#ff0000" />
      <circle cx="548" cy="648" r="5.500" fill="#0000c0" />
      <text x="548" y="616" textAnchor="middle" className="text-[15px]" fill="#00ff00">Y</text>
      <text x="584" y="654" textAnchor="middle" className="text-[15px]" fill="#ff0000">X</text>
    </svg>
  );
}

function Cube({ open, children }: { open?: boolean; children?: ReactNode }) {
  return (
    <svg width="24" height="24" viewBox="0 0 24 24" className="block">
      <path d="M.500 5.500 5 .500h18.500v17l-5 5H.500z" fill="#8596ad" stroke="#38414f" />
      {open && <path d="M1 6h17v16H1z" fill="#cfe6ff" />}
      {open && <path d="M18 6l5-5v16l-5 5z" fill="#e6f2ff" />}
      <path d="M.500 5.500h18v17M18.500 5.500l5-5" fill="none" stroke="#38414f" />
      {open && <path d="M5.500 6v11H23M.500 22.500l5-5" fill="none" stroke="#38414f" />}
      {children}
    </svg>
  );
}

function ViewTools() {
  return (
    <div className="absolute top-0 right-0 flex h-[227px] w-[33px] flex-col items-center border-l border-[#b9bbbf] bg-[#97999d] pt-2.5 pr-0.5 text-[#38414f]">
      <button type="button" aria-label="动态观察">
        <svg width="24" height="24" viewBox="0 0 26 24" className="block">
          <defs>
            <radialGradient id="ball" cx=".35" cy=".3" r=".8">
              <stop offset="0" stopColor="#f0f5fa" />
              <stop offset="1" stopColor="#6f839c" />
            </radialGradient>
          </defs>
          <circle cx="13" cy="12" r="9.500" fill="url(#ball)" stroke="#4c5868" />
          <path d="M1 18q-1-4 5-3M1 18q10 2 20-9" fill="none" stroke="#38414f" strokeWidth="1.500" />
          <circle cx="21" cy="7" r="3.500" fill="#dfe8f2" stroke="#4c5868" />
        </svg>
      </button>
      <button type="button" aria-label="三维" className="mt-1.5">
        <Cube>
          <text x="6" y="20" fontSize="9" fill="#2c3440">3D</text>
        </Cube>
      </button>
      <button type="button" aria-label="线框" className="mt-[5px] flex flex-col items-center gap-1.5">
        <Cube open />
        <svg width="6" height="3"><path d="M0 0h6L3 3z" fill="#222b38" /></svg>
      </button>
      <button type="button" aria-label="视图" className="mt-1.5 flex flex-col items-center gap-1.5">
        <Cube />
        <svg width="6" height="3"><path d="M0 0h6L3 3z" fill="#222b38" /></svg>
      </button>
      <button type="button" aria-label="旋转" className="mt-1.5 flex flex-col items-center gap-1.5">
        <svg width="24" height="24" viewBox="0 0 24 24" className="block">
          <path d="M21 17a10 10 0 1 1-1-11" fill="none" stroke="#38414f" strokeWidth="2" />
          <path d="M22 2v7h-7z" fill="#38414f" />
        </svg>
        <svg width="6" height="3"><path d="M0 0h6L3 3z" fill="#222b38" /></svg>
      </button>
      <hr className="my-[5px] w-[23px] border-[#6a6d72]" />
      <button type="button" aria-label="显示设置">
        <svg width="24" height="24" viewBox="0 0 24 24" className="block" fill="none" stroke="#38414f">
          <path d="M.500 3.500 3 .500h18l2.500 3v19H.500z" fill="#8596ad" />
          <path d="M1 3.500h22M11.500 9v12M3 6l2 2 2-3M14 6l2 2 2-3" />
          <path d="M3.500 10.500h2v2h-2zM3.500 14.500h2v2h-2zM3.500 18.500h2v2h-2zM14.500 10.500h2v2h-2zM14.500 14.500h2v2h-2zM14.500 18.500h2v2h-2zM7 11.500h3M7 15.500h3M7 19.500h3M18 11.500h3M18 15.500h3M18 19.500h3" />
        </svg>
      </button>
    </div>
  );
}

function StatusBar() {
  const btn = "flex h-[25px] items-center justify-center border border-[#9a9a9a] bg-[#d2d2d3]";
  return (
    <footer className="flex h-[31px] shrink-0 items-center border-b border-white bg-[#dcdcde] pl-0.5 whitespace-nowrap text-[#222]">
      <span className="w-[263px]">X = 25724 Y = 24997</span>
      <span className="w-[83px]">层高： 3.6</span>
      <span className="w-[133px]">标高： -0.05~3.55</span>
      <span className="w-[103px]">0</span>
      <span className="w-[103px]">隐藏 : 0</span>
      <div className="flex gap-1">
        <button type="button" aria-label="正交" className={btn + " w-[25px]"}>
          <svg width="14" height="14" fill="none" stroke="#444"><path d="M1.500 1v11.500H13M1 8.500h5v4" /></svg>
        </button>
        <button type="button" aria-label="框选" className="flex h-[25px] w-9 items-center justify-center gap-1.5 border border-[#2f8be6] bg-white">
          <svg width="17" height="16">
            <path d="M2.500 2.500h12v12h-12z" fill="none" stroke="#2f6fc4" />
            <path d="M0 0h5v5H0z" fill="#ef7d22" />
          </svg>
          <svg width="5" height="4"><path d="M0 0h5L2.500 4z" fill="#444" /></svg>
        </button>
        <button type="button" aria-label="交点" className={btn + " w-[26px] opacity-70"}>
          <svg width="16" height="16" stroke="#777"><path d="M1 1l14 14M15 1 1 15M6 8h4" /></svg>
        </button>
        <button type="button" aria-label="角度" className={btn + " w-9 gap-1.5"}>
          <svg width="17" height="14" stroke="#333"><path d="M1 12.500h16M1 12 12 2M5 6h5l-2 4z" fill="#333" /></svg>
          <svg width="5" height="4"><path d="M0 0h5L2.500 4z" fill="#444" /></svg>
        </button>
        <button type="button" aria-label="偏移" className={btn + " w-9 gap-1.5"}>
          <svg width="17" height="14"><path d="M1 3.500h5M3.500 1v5" stroke="#333" /><path d="M6 8h10v5H6z" fill="#333" /></svg>
          <svg width="5" height="4"><path d="M0 0h5L2.500 4z" fill="#444" /></svg>
        </button>
        <button type="button" className={btn + " w-[73px]"}>跨图层选择</button>
        <button type="button" className={btn + " -ml-px w-[61px]"}>折线选择</button>
      </div>
      <span className="pl-1.5">按鼠标左键指定第一个角点，或拾取构件图元</span>
      <span className="ml-auto pr-3">333.333 FPS</span>
    </footer>
  );
}

function Taskbar() {
  const app = "flex h-[38px] w-[58px] items-center justify-center rounded-xs border border-[#123c5e]/80 ring-1 ring-white/40 ring-inset";
  return (
    <div className="relative flex h-[39px] shrink-0 items-center overflow-hidden border-t border-[#16324c] bg-[#2678bf] text-white">
      <svg className="absolute inset-0 h-full w-full" viewBox="0 0 1366 39" preserveAspectRatio="none" aria-hidden="true">
        <defs>
          <linearGradient id="sky">
            <stop offset="0" stopColor="#1b5687" />
            <stop offset=".05" stopColor="#2b78b0" />
            <stop offset=".2" stopColor="#55aedb" />
            <stop offset=".45" stopColor="#3797d2" />
            <stop offset=".6" stopColor="#2678bf" />
            <stop offset=".7" stopColor="#1f66b2" />
            <stop offset=".74" stopColor="#19508c" />
            <stop offset="1" stopColor="#123a6c" />
          </linearGradient>
        </defs>
        <rect width="1366" height="39" fill="url(#sky)" />
        <path d="M240 39Q255 12 300 0h130q25 18 30 39z" fill="#fff" opacity=".06" />
        <path d="M510 39Q640 20 690 0h60q-100 32-200 39z" fill="#fff" opacity=".08" />
        <path d="M898-2Q950 12 984 42" fill="none" stroke="#6db4f0" strokeWidth="14" opacity=".35" />
        <path d="M898-2Q950 12 984 42" fill="none" stroke="#b4dcff" strokeWidth="6" opacity=".85" />
      </svg>
      <button type="button" aria-label="开始菜单" className="relative flex w-[60px] justify-center pr-1.5">
        <svg width="38" height="38" viewBox="0 0 38 38">
          <defs>
            <radialGradient id="orb" cx=".5" cy=".9" r=".8">
              <stop offset="0" stopColor="#38d6ff" />
              <stop offset=".5" stopColor="#1b6ea6" />
              <stop offset="1" stopColor="#6e8ba2" />
            </radialGradient>
          </defs>
          <circle cx="19" cy="19" r="18" fill="url(#orb)" stroke="#15344e" />
          <path d="M11 9q4-2 8 0l-2 9q-4-2-8 0z" fill="#f0592a" />
          <path d="M20 10q4 2 9 0l-2 9q-5 2-9 0z" fill="#8cc63f" />
          <path d="M8 20q5-2 9 0l-2 9q-4-2-9 0z" fill="#3fa9f5" />
          <path d="M18 21q4 2 9 0l-2 9q-5 2-9 0z" fill="#fdc52e" />
        </svg>
      </button>
      <div className="relative flex gap-1">
        <button type="button" aria-label="浏览器" className={app + " bg-white/30"}>
          <svg width="34" height="34" viewBox="-17 -17 34 34">
            {["#c345e8", "#f2453d", "#f9c80e", "#3bc451", "#2d9cf0"].map((c, i) => (
              <path key={c} transform={`rotate(${i * 72})`} d="M0-2Q-8-4-7-11-2-17 5-14 11-10 8-3 5-7 0-2z" fill={c} />
            ))}
            <circle r="3" fill="#fff" />
          </svg>
        </button>
        <button type="button" aria-label="输入法" className={app + " bg-white/30"}>
          <svg width="34" height="34" viewBox="0 0 34 34">
            <path d="M7 2l22 3v19L9 19z" fill="#d8dce0" />
            <path d="M9 4l17 3v14l-15-4z" fill="#1427b0" />
            <path d="M16 23l6 1v4l5 3q-8 4-14-1z" fill="#cfd4d9" />
            <rect x="2" y="9" width="20" height="11" fill="#2d8fe0" stroke="#fff" />
            <path d="M4 12h16M4 14.500h16M4 17h16" stroke="#fff" strokeDasharray="2 1" />
          </svg>
        </button>
        <button type="button" aria-label="GTJ2018" className={app + " bg-white/60"}>
          <svg width="34" height="34" viewBox="0 0 34 34">
            <rect x="1" y="1" width="32" height="32" rx="5" fill="#2e86ec" />
            <path d="M1 11h32M1 23h32M11 1v32M23 1v32" stroke="#5ba5f5" />
            <path d="M7 8q10 2 20 0v5l-8 1 2 13q-4 3-7 0l1-13-8-1z" fill="#fff" />
          </svg>
        </button>
      </div>
      <div className="relative ml-auto flex items-center">
        <div className="flex items-center gap-[7px]">
          <svg width="16" height="16"><path d="M4 1h9v13H4z" fill="#dceafa" /><path d="M3 7l3 5 4-11" fill="none" stroke="#e5341d" strokeWidth="2" /></svg>
          <svg width="16" height="16" fill="none" stroke="#aeb4ba"><path d="M1.500 6.500h13v7h-13zM3 9.500h10M5 11.500h6M4 5q2-4 5-2t5-1" /></svg>
          <svg width="14" height="18" fill="none" stroke="#fff"><path d="M5.500 1.500h6v4h-6zM3.500 3.500h5v4h-5z" fill="#1a4680" /><path d="M5 13h5l-2.500 3z" fill="#fff" stroke="none" /></svg>
          <svg width="16" height="16" fill="#fff"><path d="M8 1q5 1 5 6v4l2 2H1l2-2V7q0-5 5-6zM6 14h4l-2 2z" /></svg>
          <svg width="17" height="17"><circle cx="8.500" cy="8.500" r="8" fill="#f5d820" /><circle cx="8.500" cy="8.500" r="5" fill="#35a535" /><path d="M8.500 5v7M5 8.500h7" stroke="#fff" strokeWidth="2" /></svg>
          <svg width="16" height="16"><path d="M3 9l6-7 5 5-4 3z" fill="#b8c4d0" /><circle cx="5" cy="10" r="4" fill="#c83a2c" /><circle cx="13" cy="11" r="2.500" fill="#8c97a3" /></svg>
          <svg width="16" height="17" fill="none" stroke="#fff"><path d="M2.500 3.500h8v12h-8z" fill="#fff" /><path d="M5 1h4v2M8.500 7.500h5v4h-5zM9.500 4v3M12.500 4v3M11 12v4" fill="#1a4680" /></svg>
          <svg width="18" height="15" fill="#fff"><path d="M2 11h2v3H2zM5 9h2v5H5zM8 7h2v7H8zM11 4h2v10h-2zM14 1h2v13h-2z" /></svg>
          <svg width="16" height="16" fill="none" stroke="#fff"><path d="M1 6h3l4-4v12l-4-4H1z" fill="#fff" /><path d="M10 5q2 3 0 6M12 3q4 5 0 10" /></svg>
        </div>
        <time className="flex w-[126px] flex-col items-center pl-2 leading-[18px]">
          <span>下午 9:24</span>
          <span>2020/4/16 星期四</span>
        </time>
        <button type="button" aria-label="显示桌面" className="h-[38px] w-[13px] border border-[#0d2745] bg-white/15" />
      </div>
    </div>
  );
}

function App() {
  return (
    <div className="flex h-screen flex-col overflow-hidden bg-white font-['Noto_Sans','Noto_Sans_CJK_SC',sans-serif] text-xs leading-4 text-black">
      <Header />
      <Ribbon />
      <Selectors />
      <main className="flex min-h-0 flex-1">
        <NavTree />
        <div className="ml-1 flex w-[280px] shrink-0 flex-col">
          <ComponentList />
          <PropertyList />
        </div>
        <div className="flex w-1 shrink-0 flex-col pt-[217px]">
          <button type="button" aria-label="收起" className="flex h-[100px] items-center bg-[#5f6b78]">
            <svg width="4" height="6"><path d="M4 0v6L0 3z" fill="#c9ced4" /></svg>
          </button>
        </div>
        <div className="relative min-w-0 flex-1 overflow-hidden bg-black">
          <Plan />
          <ViewTools />
        </div>
      </main>
      <StatusBar />
      <Taskbar />
    </div>
  );
}

export default App;
